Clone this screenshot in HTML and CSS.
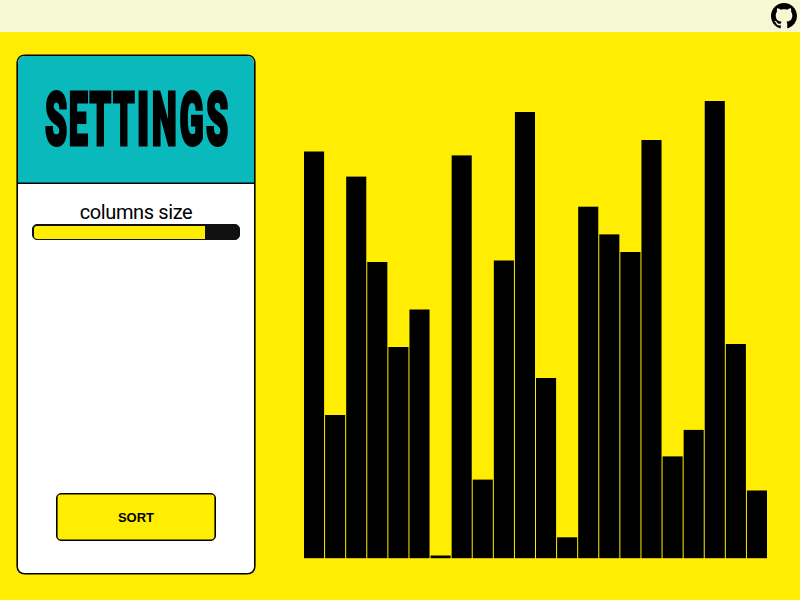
FILE: index.html
```
<!DOCTYPE html>
<html lang="en">
<head>
<meta charset="utf-8">
<title>Sorting</title>
<link rel="stylesheet" href="styles.css">
</head>
<body>
<header class="topbar">
  <a class="github" href="#" aria-label="GitHub"><svg viewBox="0 0 16 16"><path fill-rule="evenodd" d="M8 0C3.58 0 0 3.58 0 8c0 3.54 2.29 6.53 5.47 7.59.4.07.55-.17.55-.38 0-.19-.01-.82-.01-1.49-2.01.37-2.53-.49-2.69-.94-.09-.23-.48-.94-.82-1.13-.28-.15-.68-.52-.01-.53.63-.01 1.08.58 1.23.82.72 1.21 1.87.87 2.33.66.07-.52.28-.87.51-1.07-1.78-.2-3.64-.89-3.64-3.95 0-.87.31-1.59.82-2.15-.08-.2-.36-1.02.08-2.12 0 0 .67-.21 2.2.82.64-.18 1.32-.27 2-.27s1.36.09 2 .27c1.53-1.04 2.2-.82 2.2-.82.44 1.1.16 1.92.08 2.12.51.56.82 1.27.82 2.15 0 3.07-1.87 3.75-3.65 3.95.29.25.54.73.54 1.48 0 1.07-.01 1.93-.01 2.2 0 .21.15.46.55.38A8.01 8.01 0 0 0 16 8c0-4.42-3.58-8-8-8z"/></svg></a>
</header>
<main class="content">
  <section class="panel">
    <h1 class="title">
      <svg class="title-text" viewBox="0 0 238 127">
        <text transform="translate(28 88.5) scale(.475 1)">S</text>
        <text transform="translate(51.8 88.5) scale(.455 1)">E</text>
        <text transform="translate(72.5 88.5) scale(.46 1)">T</text>
        <text transform="translate(95.9 88.5) scale(.46 1)">T</text>
        <text transform="translate(119.7 88.5) scale(.56 1)">I</text>
        <text transform="translate(134.8 88.5) scale(.475 1)">N</text>
        <text transform="translate(162.6 88.5) scale(.475 1)">G</text>
        <text transform="translate(189 88.5) scale(.475 1)">S</text>
      </svg>
    </h1>
    <div class="controls">
      <div class="field">
        <label class="label">columns size</label>
        <div class="slider"><div class="fill"></div></div>
      </div>
      <button class="sort">SORT</button>
    </div>
  </section>
  <svg class="chart" viewBox="0 0 464 504">
    <rect x="0.00" y="97.5" width="20.09" height="406.7"/>
    <rect x="21.09" y="361.0" width="20.09" height="143.2"/>
    <rect x="42.18" y="122.6" width="20.09" height="381.6"/>
    <rect x="63.27" y="208.0" width="20.09" height="296.2"/>
    <rect x="84.36" y="293.0" width="20.09" height="211.2"/>
    <rect x="105.45" y="255.5" width="20.09" height="248.7"/>
    <rect x="126.55" y="501.5" width="20.09" height="2.7"/>
    <rect x="147.64" y="101.4" width="20.09" height="402.8"/>
    <rect x="168.73" y="425.6" width="20.09" height="78.6"/>
    <rect x="189.82" y="206.5" width="20.09" height="297.7"/>
    <rect x="210.91" y="58.0" width="20.09" height="446.2"/>
    <rect x="232.00" y="324.0" width="20.09" height="180.2"/>
    <rect x="253.09" y="483.3" width="20.09" height="20.9"/>
    <rect x="274.18" y="152.7" width="20.09" height="351.5"/>
    <rect x="295.27" y="180.4" width="20.09" height="323.8"/>
    <rect x="316.36" y="198.0" width="20.09" height="306.2"/>
    <rect x="337.45" y="86.0" width="20.09" height="418.2"/>
    <rect x="358.55" y="402.4" width="20.09" height="101.8"/>
    <rect x="379.64" y="375.9" width="20.09" height="128.3"/>
    <rect x="400.73" y="47.0" width="20.09" height="457.2"/>
    <rect x="421.82" y="290.0" width="20.09" height="214.2"/>
    <rect x="442.91" y="436.5" width="20.09" height="67.7"/>
  </svg>
</main>
</body>
</html>
```

FILE: styles.css
```
* { box-sizing: border-box; }
body {
  margin: 0;
  height: 100vh;
  display: flex;
  flex-direction: column;
  overflow: hidden;
  background: #ffee02;
  color: #000;
  font-family: Roboto, sans-serif;
}
.topbar {
  height: 32px;
  display: flex;
  align-items: center;
  justify-content: flex-end;
  padding-right: 3px;
  background: #f6f7d3;
}
.github, .github svg { display: block; width: 26px; height: 26px; }
.content {
  flex: 1;
  display: flex;
  gap: 49px;
  padding: 22px 32px 25px 17px;
}
.panel {
  width: 238px;
  height: 519px;
  margin-top: 1px;
  display: flex;
  flex-direction: column;
  overflow: hidden;
  border: 1px solid #000;
  border-radius: 7.5px;
  box-shadow: 0 0 0 .6px #000;
  background: #fff;
}
.title {
  flex: none;
  height: 128px;
  margin: 0;
  border-bottom: 1px solid #000;
  box-shadow: 0 -.6px 0 #000 inset;
  background: #09b9bc;
}
.title-text {
  display: block;
  width: 238px;
  height: 127px;
  margin-left: -1px;
  font: 900 75px Roboto, sans-serif;
  stroke: #000;
  stroke-width: 3.2px;
  stroke-miterlimit: 1.5;
}
.controls {
  flex: 1;
  display: flex;
  flex-direction: column;
  align-items: center;
  justify-content: space-between;
  padding: 17px 14px 32px;
}
.field {
  width: 208px;
  display: flex;
  flex-direction: column;
  align-items: center;
}
.label { font-size: 20px; line-height: 23px; letter-spacing: -.39px; }
.slider {
  width: 208px;
  height: 16px;
  overflow: hidden;
  border: 1px solid #111;
  box-shadow: inset 0 0 0 .5px #111;
  border-radius: 5px;
  background: #111;
  padding: .5px;
}
.fill { width: 171.5px; height: 100%; border-radius: 3px 0 0 3px; background: #ffee02; }
.sort {
  width: 160px;
  height: 48px;
  border: 1px solid #000;
  border-radius: 5px;
  box-shadow: inset 0 0 0 .6px #000;
  background: #ffee02;
  color: #000;
  font: bold 13px "Liberation Sans", Arial, sans-serif;
}
.chart {
  flex: none;
  width: 464px;
  height: 504px;
  overflow: visible;
}
```
